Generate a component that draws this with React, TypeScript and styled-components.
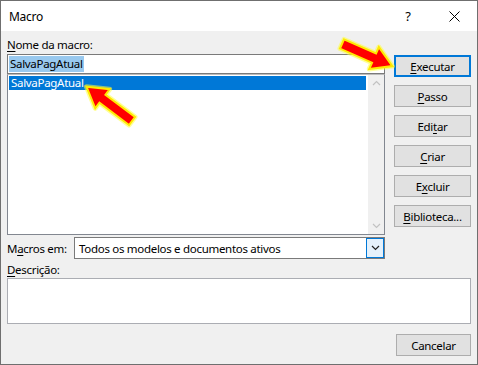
import React from 'react';
import styled, { createGlobalStyle } from 'styled-components';

const GlobalStyle = createGlobalStyle`
  html, body {
    margin: 0;
    padding: 0;
    background: #ffffff;
  }
  body {
    font-family: "Noto Sans", "Liberation Sans", sans-serif;
    font-size: 11.5px;
    letter-spacing: -0.3px;
    color: #000;
  }
  * {
    box-sizing: border-box;
  }
`;

const Window = styled.div`
  position: relative;
  width: 478px;
  height: 365px;
  border: 1px solid #6f6f6f;
  display: flex;
  flex-direction: column;
  overflow: hidden;
`;

const TitleBar = styled.div`
  height: 30px;
  flex: none;
  background: #ffffff;
  display: flex;
  align-items: center;
`;

const Title = styled.span`
  padding-left: 8px;
  font-size: 12px;
  flex: 1;
`;

const TitleButton = styled.div`
  width: 46px;
  height: 30px;
  display: flex;
  align-items: center;
  justify-content: center;
  font-size: 13px;
`;

const Body = styled.div`
  flex: 1;
  background: #f0f0f0;
  padding: 6px 6px 0 6px;
  display: flex;
  flex-direction: column;
`;

const Top = styled.div`
  display: flex;
  gap: 9px;
`;

const LeftColumn = styled.div`
  width: 378px;
  display: flex;
  flex-direction: column;
`;

const RightColumn = styled.div`
  flex: 1;
  display: flex;
  flex-direction: column;
  gap: 8px;
  margin-top: 18px;
`;

const Label = styled.div<{ $gap?: number }>`
  height: 16px;
  line-height: 16px;
  margin-bottom: ${({ $gap }) => $gap ?? 1}px;
  white-space: nowrap;
`;

const Key = styled.span`
  text-decoration: underline;
  text-underline-offset: 2px;
`;

const TextField = styled.div`
  height: 20px;
  border: 1px solid #7a7a7a;
  background: #ffffff;
  padding: 1px 1px;
  display: flex;
  align-items: center;
`;

const Selection = styled.span`
  background: #99c9ef;
  line-height: 16px;
  padding: 0 1px;
`;

const ListBox = styled.div`
  height: 161px;
  border: 1px solid #828790;
  border-top-color: #bcbcbc;
  background: #ffffff;
  display: flex;
`;

const Items = styled.div`
  flex: 1;
  padding: 1px 1px 0 1px;
`;

const Item = styled.div<{ $selected?: boolean }>`
  height: 14px;
  line-height: 14px;
  padding-left: 2px;
  background: ${({ $selected }) => ($selected ? '#0078d7' : 'transparent')};
  color: ${({ $selected }) => ($selected ? '#ffffff' : '#000000')};
`;

const ScrollBar = styled.div`
  width: 16px;
  margin-left: 1px;
  background: #f0f0f0;
  display: flex;
  flex-direction: column;
  justify-content: space-between;
  align-items: center;
  padding: 5px 0 5px 0;
`;

const MacrosRow = styled.div`
  margin-top: 2px;
  display: flex;
  align-items: center;
  height: 22px;
`;

const MacrosLabel = styled.span`
  width: 67px;
  white-space: nowrap;
`;

const Select = styled.div`
  flex: 1;
  height: 22px;
  border: 1px solid #7a7a7a;
  background: #ffffff;
  display: flex;
  align-items: center;
  padding-left: 4px;
`;

const SelectText = styled.span`
  flex: 1;
  white-space: nowrap;
`;

const DropButton = styled.div`
  width: 18px;
  height: 20px;
  border: 1px solid #0078d7;
  background: #e5f1fb;
  display: flex;
  align-items: center;
  justify-content: center;
`;

const DescriptionBox = styled.div`
  height: 46px;
  border: 1px solid #abadb3;
  background: #ffffff;
`;

const Button = styled.div<{ $default?: boolean; $width?: number }>`
  height: 22px;
  width: ${({ $width }) => ($width ? `${$width}px` : 'auto')};
  background: #e1e1e1;
  border: ${({ $default }) => ($default ? '2px solid #0078d7' : '1px solid #adadad')};
  display: flex;
  align-items: center;
  justify-content: center;
  white-space: nowrap;
`;

const Footer = styled.div`
  margin-top: 10px;
  display: flex;
  justify-content: flex-end;
`;

const Overlay = styled.svg`
  position: absolute;
  left: 0;
  top: 0;
  pointer-events: none;
`;

const Chevron = ({ up, color }: { up?: boolean; color: string }) => (
  <svg width="9" height="6" viewBox="0 0 9 6">
    <polyline
      points={up ? '1,5 4.5,1.5 8,5' : '1,1 4.5,4.5 8,1'}
      fill="none"
      stroke={color}
      strokeWidth="1.2"
    />
  </svg>
);

const CloseIcon = () => (
  <svg width="11" height="11" viewBox="0 0 11 11">
    <path d="M0.5 0.5 L10.5 10.5 M10.5 0.5 L0.5 10.5" stroke="#000" strokeWidth="1" />
  </svg>
);

// red arrow with yellow glow, pointing along +x, tip at (len, 0)
const Arrow = ({ x, y, angle, len }: { x: number; y: number; angle: number; len: number }) => {
  const head = 20;
  const hw = 12;
  const sw = 5;
  const b = len - head;
  const pts = `0,${-sw} ${b},${-sw} ${b},${-hw} ${len},0 ${b},${hw} ${b},${sw} 0,${sw}`;
  return (
    <g transform={`translate(${x} ${y}) rotate(${angle})`}>
      <polygon points={pts} fill="#ffff40" stroke="#ffff40" strokeWidth="5" strokeLinejoin="round" opacity="0.55" />
      <polygon points={pts} fill="#ff0000" stroke="#ffea00" strokeWidth="2" strokeLinejoin="miter" />
    </g>
  );
};

const buttons: { label: React.ReactNode; isDefault?: boolean }[] = [
  { label: <><Key>E</Key>xecutar</>, isDefault: true },
  { label: <><Key>P</Key>asso</> },
  { label: <>Edi<Key>t</Key>ar</> },
  { label: <><Key>C</Key>riar</> },
  { label: <>E<Key>x</Key>cluir</> },
  { label: <><Key>B</Key>iblioteca...</> },
];

export default function App() {
  return (
    <>
      <GlobalStyle />
      <Window>
        <TitleBar>
          <Title>Macro</Title>
          <TitleButton>?</TitleButton>
          <TitleButton>
            <CloseIcon />
          </TitleButton>
        </TitleBar>
        <Body>
          <Top>
            <LeftColumn>
              <Label>
                <Key>N</Key>ome da macro:
              </Label>
              <TextField>
                <Selection>SalvaPagAtual</Selection>
              </TextField>
              <ListBox>
                <Items>
                  <Item $selected>SalvaPagAtual</Item>
                </Items>
                <ScrollBar>
                  <Chevron up color="#c2c2c2" />
                  <Chevron color="#c2c2c2" />
                </ScrollBar>
              </ListBox>
              <MacrosRow>
                <MacrosLabel>
                  M<Key>a</Key>cros em:
                </MacrosLabel>
                <Select>
                  <SelectText>Todos os modelos e documentos ativos</SelectText>
                  <DropButton>
                    <Chevron color="#202020" />
                  </DropButton>
                </Select>
              </MacrosRow>
            </LeftColumn>
            <RightColumn>
              {buttons.map((b, i) => (
                <Button key={i} $default={b.isDefault}>
                  {b.label}
                </Button>
              ))}
            </RightColumn>
          </Top>
          <Label $gap={0} style={{ marginTop: 3 }}>
            <Key>D</Key>escrição:
          </Label>
          <DescriptionBox />
          <Footer>
            <Button $width={75}>Cancelar</Button>
          </Footer>
        </Body>
        <Overlay width="478" height="365">
          <Arrow x={131} y={120} angle={217} len={57} />
          <Arrow x={341} y={43} angle={23.7} len={55} />
        </Overlay>
      </Window>
    </>
  );
}
